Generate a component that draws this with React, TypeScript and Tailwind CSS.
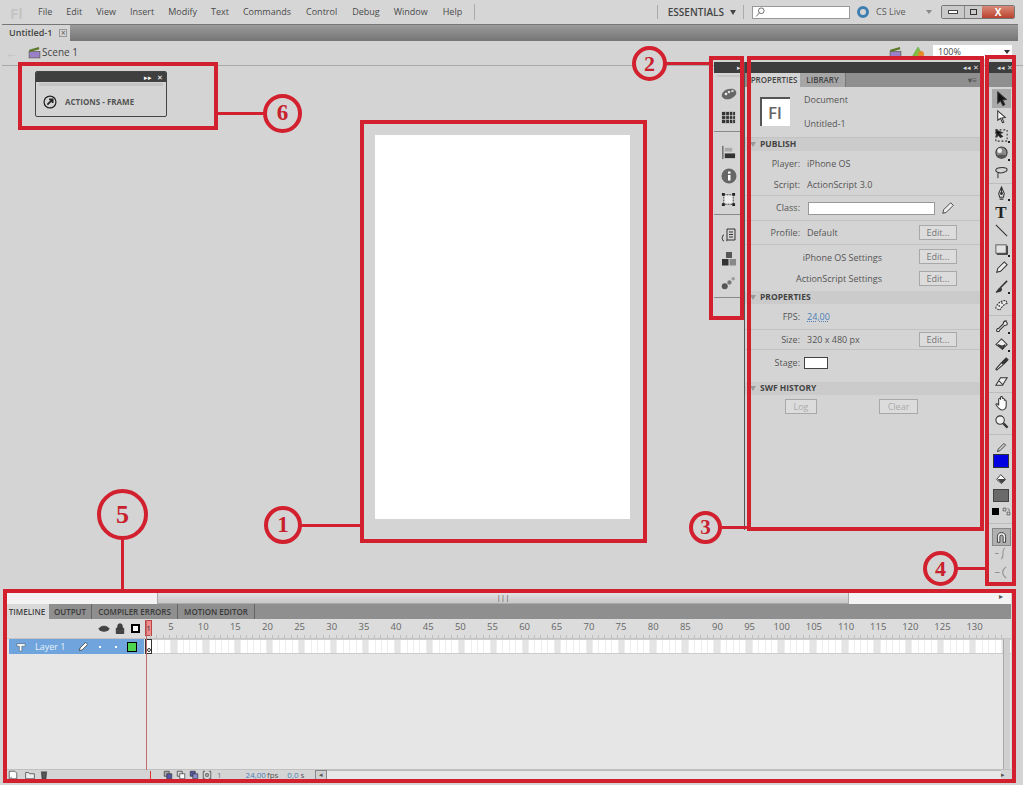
import React from 'react'

// small 16x16 drawings used by the panels
type IconProps = { children: React.ReactNode; className?: string }
function Ico({ children, className = 'w-4 h-4' }: IconProps): React.ReactElement {
  return (
    <svg viewBox="0 0 16 16" className={className} fill="none" stroke="#333" strokeWidth="1.1">
      {children}
    </svg>
  )
}

const menuItems: [string, string][] = [
  ['File', 'ml-[38px]'], ['Edit', 'ml-[14px]'], ['View', 'ml-[14px]'], ['Insert', 'ml-[14px]'], ['Modify', 'ml-[14px]'],
  ['Text', 'ml-[14px]'], ['Commands', 'ml-[14px]'], ['Control', 'ml-[15px]'], ['Debug', 'ml-[15px]'], ['Window', 'ml-[14px]'], ['Help', 'ml-[15px]'],
]

function MenuBar(): React.ReactElement {
  return (
    <div className="h-[24px] flex items-center bg-[#d6d6d6] text-[9px] text-[#4a4a4a] relative shrink-0">
      <span className="absolute left-[10px] top-[2px] text-[15px] font-bold text-[#c4c4c4]">Fl</span>
      {menuItems.map(([name, ml]) => (
        <span key={name} className={ml}>{name}</span>
      ))}
      <div className="ml-[12px] w-px h-[16px] bg-[#aaa]" />
      <div className="ml-auto w-px h-[14px] bg-[#aaa]" />
      <span className="ml-[10px] text-[10px] font-semibold text-[#444]">ESSENTIALS</span>
      <span className="ml-[6px] w-0 h-0 border-x-[3px] border-x-transparent border-t-[5px] border-t-[#444]" />
      <div className="ml-[7px] w-px h-[14px] bg-[#aaa]" />
      <div className="ml-[8px] w-[98px] h-[13px] bg-white border border-[#999] flex items-center pl-[2px]">
        <Ico className="w-[10px] h-[10px]"><circle cx="10" cy="6" r="4.5" /><path d="M7 9.5 2 15" /></Ico>
      </div>
      <div className="ml-[7px] w-[12px] h-[12px] rounded-full border-[3px] border-[#3f7fb0] bg-[#d6d6d6]" />
      <span className="ml-[7px] w-[29px] text-[#5b5b5b] whitespace-nowrap">CS Live</span>
      <span className="ml-[21px] w-0 h-0 border-x-[3px] border-x-transparent border-t-[4px] border-t-[#888]" />
      <div className="ml-[9px] mr-[8px] flex h-[14px] border border-[#777] rounded-[2px] overflow-hidden">
        <div className="w-[23px] bg-[#c9c9c9] flex items-center justify-center border-r border-[#888]"><div className="w-[8px] h-[2px] bg-white border border-[#444] box-content" /></div>
        <div className="w-[17px] bg-[#c9c9c9] flex items-center justify-center"><div className="w-[7px] h-[6px] border border-[#333]" /></div>
        <div className="w-[32px] bg-gradient-to-b from-[#d98a78] to-[#b9402c] text-white text-[10px] font-bold leading-[12px] text-center">X</div>
      </div>
    </div>
  )
}

function TabBar(): React.ReactElement {
  return (
    <div className="h-[17px] ml-[2px] mr-[5px] flex bg-gradient-to-b from-[#9b9b9b] to-[#757575] shrink-0 border-t border-[#777]">
      <div className="w-[68px] bg-[#d4d4d4] text-[9px] text-[#444] font-semibold flex items-center pl-[7px] gap-[7px]">
        Untitled-1
        <span className="w-[8px] h-[8px] border border-[#999] text-[8px] leading-[6px] text-center text-[#666]">×</span>
      </div>
    </div>
  )
}

function Clapper({ className }: { className: string }): React.ReactElement {
  return (
    <svg viewBox="0 0 12 12" className={className}>
      <rect x="1" y="5" width="10" height="6" fill="#9a80c8" stroke="#554" strokeWidth="0.6" />
      <path d="M1 3.5 10 1l.5 2L1.5 5.5Z" fill="#5b7a2a" />
    </svg>
  )
}

function SceneBar(): React.ReactElement {
  return (
    <div className="h-[25px] ml-[2px] flex items-center border-b border-[#a9a9a9] bg-[#d4d4d4] shrink-0 text-[10px] text-[#444]">
      <span className="ml-[3px] text-[#c2c2c2] text-[13px] font-bold leading-none">←</span>
      <Clapper className="ml-[10px] w-[13px] h-[13px] mb-[2px]" />
      <span className="ml-[1px] mb-[2px] text-[10px]">Scene 1</span>
      <Clapper className="ml-auto w-[13px] h-[13px] mb-[2px]" />
      <svg viewBox="0 0 14 14" className="ml-[9px] w-[14px] h-[14px] mb-[2px]">
        <path d="M1 12 7 2l6 10Z" fill="#7fbe3f" stroke="#6a5" strokeWidth="0.6" />
        <circle cx="10" cy="9" r="3" fill="#e58a2a" />
      </svg>
      <div className="ml-[8px] mr-[11px] w-[79px] h-[14px] bg-white flex items-center pl-[5px] text-[9px] mb-[3px]">
        100%
        <span className="ml-auto mr-[2px] w-0 h-0 border-x-[3px] border-x-transparent border-t-[4px] border-t-[#333]" />
      </div>
    </div>
  )
}

function ActionsFrame(): React.ReactElement {
  return (
    <div className="absolute left-[35px] top-[71px] w-[132px] h-[46px] border border-[#444] rounded-[2px] bg-[#d4d4d4] overflow-hidden">
      <div className="h-[10px] bg-[#3f3f3f] flex items-center justify-end pr-[3px] text-[7px] text-white leading-none gap-[5px]">
        <span>▸▸</span><span>✕</span>
      </div>
      <div className="h-[3px] mt-[1px] mx-[3px] bg-[#c4c4c4]" />
      <div className="flex items-center mt-[9px] pl-[7px] gap-[8px]">
        <svg viewBox="0 0 16 16" className="w-[14px] h-[14px]" fill="none" stroke="#222" strokeWidth="1.4">
          <circle cx="8" cy="8" r="6.8" />
          <path d="M5 11 11 5M7 5h4v4" strokeWidth="2" />
        </svg>
        <span className="text-[8px] font-bold text-[#555]">ACTIONS - FRAME</span>
      </div>
    </div>
  )
}

function PanelHead({ arrows }: { arrows: string }): React.ReactElement {
  return (
    <div className="h-[11px] bg-[#3d3d3d] flex items-center justify-end text-[7px] text-[#ddd] leading-none gap-[4px] pr-[2px]">
      <span>{arrows}</span>
    </div>
  )
}

const stripIcons: React.ReactNode[][] = [
  [
    <svg key="p" viewBox="0 0 16 16" className="w-[16px] h-[16px]"><ellipse cx="8" cy="8" rx="7.5" ry="5" fill="#666" transform="rotate(-20 8 8)" /><circle cx="5" cy="8" r="1.3" fill="#eee" /><circle cx="8" cy="6" r="1.3" fill="#ddd" /><circle cx="11.5" cy="5" r="1.3" fill="#ccc" /></svg>,
    <svg key="g" viewBox="0 0 16 16" className="w-[15px] h-[15px]"><rect x="1" y="2" width="14" height="12" fill="#333" /><path d="M1 6h14M1 10h14M5 2v12M9 2v12M12.500 2v12" stroke="#ddd" strokeWidth="0.8" /></svg>,
  ],
  [
    <svg key="a" viewBox="0 0 16 16" className="w-[15px] h-[15px]"><path d="M2 1v14" stroke="#333" /><rect x="4" y="3" width="8" height="4" fill="#aaa" /><rect x="4" y="9" width="11" height="5" fill="#333" /></svg>,
    <svg key="i" viewBox="0 0 16 16" className="w-[16px] h-[16px]"><circle cx="8" cy="8" r="7.500" fill="#666" /><rect x="7" y="7" width="2.500" height="5.500" fill="#fff" /><rect x="7" y="3.500" width="2.500" height="2.200" fill="#fff" /></svg>,
    <svg key="t" viewBox="0 0 16 16" className="w-[15px] h-[15px]"><rect x="3" y="3" width="10" height="10" fill="#eee" stroke="#333" strokeDasharray="2 1" /><path d="M1 1h3v3H1zM12 1h3v3h-3zM1 12h3v3H1zM12 12h3v3h-3z" fill="#222" /></svg>,
  ],
  [
    <svg key="c" viewBox="0 0 16 16" className="w-[16px] h-[16px]" fill="none" stroke="#333"><path d="M6 2h8v11H6zM8 5h4M8 7.500h4M8 10h4" /><path d="M3 8c-2 0-1 2-2 3 1 1 0 3 2 3M5 14c1 0 1-1 1-1" /></svg>,
    <svg key="b" viewBox="0 0 16 16" className="w-[16px] h-[16px]"><rect x="5" y="1" width="6" height="6" fill="#555" /><rect x="1" y="8" width="6.500" height="6.500" fill="#333" /><rect x="8.500" y="8" width="6.500" height="6.500" fill="#888" /></svg>,
    <svg key="m" viewBox="0 0 16 16" className="w-[15px] h-[15px]"><circle cx="4" cy="12" r="3.200" fill="#555" /><circle cx="9" cy="8" r="2.300" fill="#777" /><circle cx="13" cy="4" r="1.800" fill="#999" /></svg>,
  ],
]

function IconStrip(): React.ReactElement {
  return (
    <div className="w-[29px] flex flex-col self-start">
      <PanelHead arrows="▸" />
      <div className="bg-[#d4d4d4] flex flex-col">
        <div className="h-[2px] mx-[3px] mt-[2px] bg-[#c4c4c4]" />
        {stripIcons.map((group, g) => (
          <div key={g} className={g === 0 ? 'h-[55px] flex flex-col items-center gap-[8px] pt-[9px] border-b border-[#8a8a8a]' : g === 1 ? 'h-[83px] flex flex-col items-center gap-[8px] pt-[13px] border-b border-[#8a8a8a]' : 'h-[83px] flex flex-col items-center gap-[8px] pt-[12px] border-b border-[#8a8a8a]'}>
            {group.map((icon) => icon)}
          </div>
        ))}
      </div>
    </div>
  )
}

function EditBtn({ label = 'Edit...', className = 'w-[38px]', dim = false }: { label?: string; className?: string; dim?: boolean }): React.ReactElement {
  return (
    <div className={`h-[15px] border border-[#a8a8a8] bg-[#dcdcdc] text-[9px] leading-[13px] text-center ${dim ? 'text-[#aaa]' : 'text-[#777]'} ${className}`}>{label}</div>
  )
}

function Section({ title }: { title: string }): React.ReactElement {
  return (
    <div className="h-[13px] bg-[#cbcbcb] flex items-center text-[8.5px] font-bold text-[#444] pl-[5px] gap-[4px] leading-none">
      <span className="w-0 h-0 border-x-[3px] border-x-transparent border-t-[5px] border-t-[#999]" />
      {title}
    </div>
  )
}

function PropertiesPanel(): React.ReactElement {
  return (
    <div className="w-[237px] h-[468px] ml-px flex flex-col bg-[#d4d4d4] border-l border-[#555] text-[9px] text-[#555]">
      <PanelHead arrows="◂◂ ✕" />
      <div className="h-[14px] flex bg-[#8f8f8f] pl-[3px] text-[8px] font-semibold leading-[14px]">
        <div className="w-[52px] bg-[#d4d4d4] text-center text-[#444]">PROPERTIES</div>
        <div className="w-[46px] bg-[#a6a6a6] text-center text-[#444] border-r border-[#777]">LIBRARY</div>
        <div className="ml-auto mr-[4px] text-[#555]">▾≡</div>
      </div>
      <div className="h-[51px] flex pl-[15px] pt-[10px] border-b border-[#c2c2c2]">
        <div className="w-[30px] h-[29px] bg-white border-t-2 border-l-2 border-[#555] text-[17px] font-semibold text-[#666] leading-[27px] pl-[6px]">Fl</div>
        <div className="ml-[14px] -mt-[4px] flex flex-col gap-[10px]">
          <span>Document</span>
          <span>Untitled-1</span>
        </div>
      </div>
      <Section title="PUBLISH" />
      <div className="h-[45px] pt-[2px] flex flex-col justify-center gap-[7px] border-b border-[#c2c2c2]">
        <div className="flex"><span className="w-[55px] text-right">Player:</span><span className="ml-[7px]">iPhone OS</span></div>
        <div className="flex"><span className="w-[55px] text-right">Script:</span><span className="ml-[7px]">ActionScript 3.0</span></div>
      </div>
      <div className="h-[25px] flex items-center border-b border-[#c2c2c2]">
        <span className="w-[55px] text-right">Class:</span>
        <div className="ml-[8px] w-[127px] h-[13px] bg-white border border-[#999]" />
        <svg viewBox="0 0 16 16" className="ml-[6px] w-[14px] h-[14px]" fill="#eee" stroke="#333"><path d="M2 14l1-4 8-8 3 3-8 8z" /></svg>
      </div>
      <div className="h-[24px] flex items-center border-b border-[#c2c2c2]">
        <span className="w-[55px] text-right">Profile:</span><span className="ml-[7px]">Default</span>
        <EditBtn className="ml-auto mr-[24px] w-[38px]" />
      </div>
      <div className="h-[22px] flex items-center">
        <span className="w-[137px] text-right pt-[3px]">iPhone OS Settings</span>
        <EditBtn className="ml-auto mr-[24px] w-[38px]" />
      </div>
      <div className="h-[23px] flex items-center">
        <span className="w-[137px] text-right">ActionScript Settings</span>
        <EditBtn className="ml-auto mr-[24px] w-[38px]" />
      </div>
      <div className="h-[1px]" />
      <Section title="PROPERTIES" />
      <div className="h-[26px] flex items-center border-b border-[#c2c2c2]">
        <span className="w-[55px] text-right">FPS:</span>
        <span className="ml-[7px] text-[#4a7fb8] underline decoration-dotted">24,00</span>
      </div>
      <div className="h-[20px] flex items-center border-b border-[#c2c2c2]">
        <span className="w-[55px] text-right">Size:</span><span className="ml-[7px]">320 x 480 px</span>
        <EditBtn className="ml-auto mr-[24px] w-[38px]" />
      </div>
      <div className="h-[26px] flex items-center">
        <span className="w-[55px] text-right">Stage:</span>
        <div className="ml-[4px] w-[24px] h-[12px] bg-white border border-[#444]" />
      </div>
      <div className="h-[6px]" />
      <Section title="SWF HISTORY" />
      <div className="flex mt-[4px] pl-[40px]">
        <EditBtn label="Log" dim className="w-[32px]" />
        <EditBtn label="Clear" dim className="ml-[62px] w-[39px]" />
      </div>
    </div>
  )
}

const P = (d: string, fill = 'none') => <path d={d} fill={fill} />

// tool palette, grouped the way the separators split it
const toolGroups: { icon: React.ReactNode; on?: boolean; more?: boolean; label?: string }[][] = [
  [
    { icon: P('M4 1l9 8-4 .5 2.500 5-2 1-2.500-5L4 13z', '#111'), on: true },
    { icon: P('M4 2l8 7-3.500.5 2 4.500-1.500.5-2-4.500L4 12z', '#fff') },
    { icon: <><path d="M2 2h12v12H2z" strokeDasharray="2 2" /><path d="M2 2l7 3-3 1 3 3-2 1-3-3-1 3z" fill="#111" /></>, more: true },
    { icon: <><circle cx="8" cy="7" r="6" fill="#8a8a8a" /><circle cx="6" cy="5" r="2.500" fill="#eee" stroke="none" /><ellipse cx="8" cy="11" rx="5" ry="2" fill="#555" stroke="none" /></>, more: true },
    { icon: <path d="M14 5c0-3-10-3-12 0-1 3 5 4 8 3 3-1 4-2 4-3zM5 8c-2 2 0 3-1 6" /> },
  ],
  [
    { icon: <><path d="M8 1 5 8l1 4h4l1-4z" fill="#ddd" /><path d="M8 1v6M6 14h4" /><circle cx="8" cy="8" r="1" fill="#333" /></>, more: true },
    { icon: null, label: 'T' },
    { icon: <path d="M2 2l12 12" /> },
    { icon: <><rect x="2" y="3" width="11" height="9" fill="#e2e2e2" stroke="#666" /><path d="M14 4v9H3" stroke="#222" strokeWidth="1.4" /></>, more: true },
    { icon: <path d="M3 13l1-4 7-7 3 3-7 7z" fill="#eee" /> },
    { icon: <><path d="M14 2 7 9" strokeWidth="1.600" /><path d="M7 9c-3 1-2 4-5 5 4 0 6-1 6-3z" fill="#333" /></>, more: true },
    { icon: <><path d="M2 12c0-4 6-9 11-8l1 3c-3 0-6 4-8 7z" fill="#eee" strokeDasharray="2 1" /><path d="M5 10l1-1M8 7l1-1" stroke="#222" strokeWidth="1.600" /></> },
  ],
  [
    { icon: <path d="M3 13c-1-2 1-3 2-3l5-5c0-2 1-3 3-3 0 2 2 2 1 4-1 1-2 1-3 1l-5 5c0 1-1 2-3 1z" fill="#eee" />, more: true },
    { icon: <><path d="M2 8l6-6 6 6-5 5z" fill="#eee" /><path d="M4 8c3 2 6 2 8 0l-3 5z" fill="#555" /></>, more: true },
    { icon: <><path d="M2 14l6-7 2 2-7 6z" fill="#eee" /><path d="M9 6l4-4 2 2-4 4-2-1z" fill="#333" /></> },
    { icon: <path d="M2 12l5-8h7l-5 8zM5 7l5 5" fill="#eee" /> },
  ],
  [
    { icon: <path d="M5 9V4c0-2 2-2 2 0V2c0-2 2-2 2 0v1c0-1 2-1 2 1v1c0-1 2-1 2 1v4c0 3-2 5-4 5-3 0-5-3-7-6 0-1 2-1 3 1z" fill="#fff" /> },
    { icon: <><circle cx="6.500" cy="6.500" r="4.500" fill="#eee" /><path d="M10 10l4.500 4.500" strokeWidth="2.400" /></> },
  ],
]

function ToolsPanel(): React.ReactElement {
  return (
    <div className="ml-[6px] w-[28px] flex flex-col">
      <PanelHead arrows="◂◂ ✕" />
      <div className="h-[14px] bg-[#8f8f8f]" />
      <div className="bg-[#d4d4d4] flex flex-col items-center h-[499px] pt-[2px]">
        {toolGroups.map((group, g) => (
          <div key={g} className={g === 3 ? 'w-full flex flex-col items-center border-b border-[#bdbdbd] pb-[3px] mb-[1px]' : 'w-full flex flex-col items-center border-b border-[#bdbdbd] pb-[1px] mb-[1px]'}>
            {group.map((tool, i) => (
              <div key={i} className={tool.on ? 'relative w-[19px] h-[18.500px] bg-[#a9a9a9] flex items-center justify-center' : 'relative w-[19px] h-[18.500px] flex items-center justify-center'}>
                {tool.label ? (
                  <span className="font-['Liberation_Serif',serif] font-bold text-[17px] leading-none text-[#222]">{tool.label}</span>
                ) : (
                  <Ico className="w-[15px] h-[15px]">{tool.icon}</Ico>
                )}
                {tool.more && <span className="absolute right-[1px] bottom-[2px] w-[2px] h-[2px] bg-[#222]" />}
              </div>
            ))}
          </div>
        ))}
        <Ico className="mt-[5px] w-[13px] h-[13px]"><path d="M3 13l1-3 7-7 2 2-7 7z" /></Ico>
        <div className="w-[16px] h-[14px] bg-[#0000e0] border border-[#333]" />
        <Ico className="mt-[5px] w-[13px] h-[13px]"><path d="M2 8l5-6 6 6-5 5z" fill="#fff" /><path d="M4 8h8l-4 4z" fill="#444" /></Ico>
        <div className="mt-[3px] w-[16px] h-[13px] bg-[#6a6a6a] border border-[#444]" />
        <div className="mt-[5px] flex gap-[3px] items-center pb-[7px] border-b border-[#bdbdbd] w-full justify-center">
          <div className="w-[7px] h-[7px] bg-black" />
          <Ico className="w-[9px] h-[9px]"><path d="M2 2h5v5H2zM9 9h5v5H9zM10 3c3 0 3 2 3 4" /></Ico>
        </div>
        <div className="mt-[4px] w-[19px] h-[18px] bg-[#b0b0b0] border border-[#888] flex items-center justify-center">
          <Ico className="w-[13px] h-[13px]"><path d="M3 14V7a5 5 0 0 1 10 0v7h-3V7a2 2 0 0 0-4 0v7z" fill="#eee" /></Ico>
        </div>
        <Ico className="w-[15px] h-[15px] opacity-40"><path d="M1 8h4M12 2C7 4 12 9 8 14" /></Ico>
        <Ico className="mt-[4px] w-[15px] h-[15px] opacity-40"><path d="M1 8h5M13 2C8 5 8 10 13 14" /></Ico>
      </div>
    </div>
  )
}

const rulerLabels = Array.from({ length: 26 }, (_, i) => (i + 1) * 5)
const frameCells = Array.from({ length: 135 }, (_, i) => i)

function Timeline(): React.ReactElement {
  return (
    <div className="relative ml-[5px] w-[1006px] h-[192px] flex flex-col bg-[#e6e6e6] shrink-0 text-[#555]">
      <div className="h-[14px] flex bg-white items-center shrink-0">
        <div className="w-[152px] bg-[#f3f3f3] h-full" />
        <div className="w-[692px] h-full bg-gradient-to-b from-[#e8e8e8] to-[#c8c8c8] border border-[#aaa] text-[8px] leading-[11px] text-center text-[#555]">|||</div>
        <div className="flex-1 h-full bg-[#f3f3f3] text-[8px] text-right pr-[8px] leading-[12px]">▸</div>
      </div>
      <div className="h-[15px] flex bg-[#8f8f8f] text-[8px] font-semibold leading-[15px] shrink-0">
        <div className="w-[44px] bg-[#d9d9d9] text-center text-[#444]">TIMELINE</div>
        <div className="w-[43px] text-center text-[#3a3a3a] border-r border-[#666]">OUTPUT</div>
        <div className="w-[86px] text-center text-[#3a3a3a] border-r border-[#666]">COMPILER ERRORS</div>
        <div className="w-[77px] text-center text-[#3a3a3a] border-r border-[#666]">MOTION EDITOR</div>
      </div>
      <div className="h-[20px] flex bg-[#dcdcdc] items-center shrink-0 border-b border-[#c4c4c4]">
        <div className="w-[140px] flex items-center">
          <Ico className="ml-[93px] w-[12px] h-[12px]"><path d="M1 8c3-5 11-5 14 0-3 4-11 4-14 0z" fill="#444" /></Ico>
          <Ico className="ml-[4px] w-[12px] h-[12px]"><path d="M3 7h10v7H3zM5 7V4a3 3 0 0 1 6 0v3" fill="#444" /></Ico>
          <div className="ml-[5px] w-[9px] h-[9px] border-2 border-black bg-white" />
        </div>
        <div className="relative h-full flex text-[9.5px] text-[#666]">
          <div className="absolute left-0 top-[1px] w-[7px] h-[16px] bg-[#f08c8c] border border-[#b44] text-[8px] leading-[14px] text-center text-[#333]">1</div>
          <div className="w-[10px]" />
          {rulerLabels.map((n) => (
            <span key={n} className="w-[32.150px] shrink-0 text-center leading-[16px]">{n}</span>
          ))}
        </div>
        <div className="absolute left-[145px] right-[8px] top-[45px] h-[3px] bg-[repeating-linear-gradient(90deg,#bdbdbd_0,#bdbdbd_1px,transparent_1px,transparent_6.400px)]" />
      </div>
      <div className="h-[15px] flex shrink-0">
        <div className="w-[135px] ml-[4px] bg-[#6fa5dc] flex items-center text-[9px] text-[#e8f0fa]">
          <svg viewBox="0 0 12 12" className="ml-[7px] w-[10px] h-[10px]"><path d="M1 2h10v3H7v6H4V5H1z" fill="#fff" stroke="#345" strokeWidth="0.6" /></svg>
          <span className="ml-[9px] w-[36px] whitespace-nowrap">Layer 1</span>
          <Ico className="ml-[7px] w-[11px] h-[11px]"><path d="M2 14l1-4 8-8 3 3-8 8z" fill="#fff" /></Ico>
          <span className="ml-[10px] w-[2px] h-[2px] bg-white" />
          <span className="ml-[14px] w-[2px] h-[2px] bg-white" />
          <span className="ml-[10px] w-[10px] h-[10px] bg-[#4fd44f] border border-black" />
        </div>
        <div className="relative ml-[1px] w-[7px] bg-white border border-[#333] flex items-end justify-center pb-[1px]">
          <span className="w-[4px] h-[4px] rounded-full border border-[#333]" />
        </div>
        <div className="flex flex-1 overflow-hidden bg-white border-y border-[#ccc]">
          {frameCells.map((i) => (
            <div key={i} className={i % 5 === 3 ? 'w-[6.400px] shrink-0 h-full bg-[#e4e4e4] border-r border-[#eee]' : 'w-[6.400px] shrink-0 h-full bg-white border-r border-[#eee]'} />
          ))}
        </div>
      </div>
      <div className="flex-1 relative">
        <div className="absolute right-[1px] top-[-15px] bottom-0 w-[7px] bg-[#cfcfcf] border-l border-[#aaa]" />
      </div>
      <div className="h-[11px] mb-[2px] flex items-center bg-[#d4d4d4] border-t border-[#c0c0c0] text-[8px] shrink-0">
        <Ico className="ml-[3px] w-[10px] h-[10px]"><path d="M2 2h9l3 3v9H2zM5 13v-2" fill="#fff" /></Ico>
        <Ico className="ml-[7px] w-[10px] h-[10px]"><path d="M1 4h5l1 2h8v8H1z" fill="#eee" /></Ico>
        <Ico className="ml-[4px] w-[10px] h-[10px]"><path d="M4 4h8l-1 11H5zM3 3h10" fill="#555" /></Ico>
        <span className="ml-[101px] w-[1px] h-[9px] bg-[#d33]" />
        <Ico className="ml-[12px] w-[10px] h-[10px]"><path d="M2 2h8v8H2z" fill="#aaa" /><path d="M6 6h8v8H6z" fill="#55a" /></Ico>
        <Ico className="ml-[3px] w-[10px] h-[10px]"><path d="M2 2h8v8H2z" /><path d="M6 6h8v8H6z" fill="#fff" /></Ico>
        <Ico className="ml-[3px] w-[10px] h-[10px]"><path d="M2 2h8v8H2z" fill="#55a" /><path d="M6 6h8v8H6z" fill="#88c" /></Ico>
        <Ico className="ml-[3px] w-[10px] h-[10px]"><path d="M5 2H2v12h3M11 2h3v12h-3M6 6h4v4H6z" /></Ico>
        <span className="ml-[5px] text-[#777]">1</span>
        <span className="ml-[24px] text-[#4a7fb8]">24,00</span>
        <span className="ml-[1px]">fps</span>
        <span className="ml-[9px] text-[#4a7fb8]">0,0</span>
        <span className="ml-[2px]">s</span>
        <div className="ml-[11px] w-[12px] h-[10px] bg-[#cfcfcf] border border-[#888] text-[7px] leading-[8px] text-center">◂</div>
        <div className="flex-1 h-[10px] bg-[#e8e8e8] border-y border-[#bbb]" />
        <span className="mr-[6px] text-[7px]">▸</span>
      </div>
      <div className="absolute left-[141px] top-[30px] bottom-[12px] w-px bg-[#c06a6a]" />
    </div>
  )
}

// red call-outs drawn on top of the screenshot
function Box({ className }: { className: string }): React.ReactElement {
  return <div className={`absolute border-[4px] border-[#d2202f] ${className}`} />
}
function Badge({ n, className }: { n: number; className: string }): React.ReactElement {
  return (
    <div className={`absolute rounded-full border-[4px] border-[#d2202f] bg-[#d4d4d4] flex items-center justify-center font-['Liberation_Serif',serif] font-bold text-[#c8202c] ${className}`}>{n}</div>
  )
}

function Annotations(): React.ReactElement {
  return (
    <>
      <Box className="left-[360px] top-[120px] w-[287px] h-[423px]" />
      <Box className="left-[709px] top-[56px] w-[35px] h-[264px]" />
      <Box className="left-[747px] top-[56px] w-[237px] h-[475px]" />
      <Box className="left-[985px] top-[55px] w-[31px] h-[531px]" />
      <Box className="left-[3px] top-[589px] w-[1013px] h-[194px]" />
      <Box className="left-[18px] top-[62px] w-[200px] h-[68px]" />
      <div className="absolute left-[217px] top-[112px] w-[49px] h-[3px] bg-[#d2202f]" />
      <div className="absolute left-[300px] top-[524px] w-[61px] h-[3px] bg-[#d2202f]" />
      <div className="absolute left-[665px] top-[62px] w-[45px] h-[3px] bg-[#d2202f]" />
      <div className="absolute left-[721px] top-[526px] w-[27px] h-[3px] bg-[#d2202f]" />
      <div className="absolute left-[956px] top-[567px] w-[30px] h-[3px] bg-[#d2202f]" />
      <div className="absolute left-[121px] top-[538px] w-[3px] h-[52px] bg-[#d2202f]" />
      <Badge n={6} className="left-[263px] top-[94px] w-[39px] h-[39px] text-[23px]" />
      <Badge n={1} className="left-[264px] top-[506px] w-[38px] h-[38px] text-[23px]" />
      <Badge n={2} className="left-[632px] top-[46px] w-[35px] h-[35px] text-[22px]" />
      <Badge n={3} className="left-[689px] top-[511px] w-[33px] h-[33px] text-[21px]" />
      <Badge n={4} className="left-[923px] top-[551px] w-[35px] h-[35px] text-[22px]" />
      <Badge n={5} className="left-[97px] top-[489px] w-[51px] h-[51px] text-[26px]" />
    </>
  )
}

export default function App(): React.ReactElement {
  return (
    <div className="relative w-[1023px] h-[785px] overflow-hidden flex flex-col bg-[#d4d4d4] font-['Open_Sans',sans-serif]">
      <MenuBar />
      <TabBar />
      <SceneBar />
      <div className="h-[528px] -mt-[4px] flex relative shrink-0">
        <div className="w-[714px] pl-[375px] pt-[73px] shrink-0">
          <div className="w-[255px] h-[384px] bg-white" />
        </div>
        <IconStrip />
        <PropertiesPanel />
        <ToolsPanel />
      </div>
      <Timeline />
      <ActionsFrame />
      <Annotations />
    </div>
  )
}
